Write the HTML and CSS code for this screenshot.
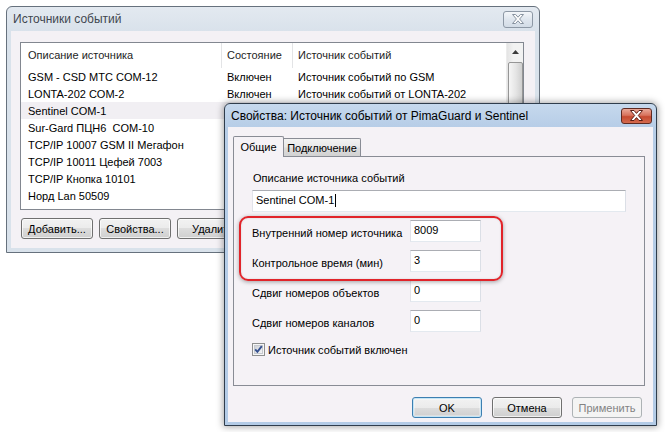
FILE: index.html
```html
<!DOCTYPE html>
<html lang="ru">
<head>
<meta charset="utf-8">
<title>Источники событий</title>
<link rel="stylesheet" href="styles.css">
</head>
<body>
<div class="desk">
  <section class="win w1">
    <header class="titlebar">
      <span class="title t-inactive">Источники событий</span>
      <span class="close close-inactive">
        <svg width="12" height="10" viewBox="0 0 12 10"><path d="M0.5 0.5H3.6L6 3.2L8.4 0.5H11.5L7.6 5L11.5 9.5H8.4L6 6.8L3.6 9.5H0.5L4.4 5Z" fill="#fdfdfd" stroke="#8893a0" stroke-width="1"/></svg>
      </span>
    </header>
    <div class="client c1">
      <div class="listbox">
        <div class="list-main">
          <div class="lv-row lv-head">
            <span class="col col1">Описание источника</span>
            <span class="col col2">Состояние</span>
            <span class="col col3">Источник событий</span>
          </div>
          <div class="lv-row"><span class="col col1">GSM - CSD МТС COM-12</span><span class="col col2">Включен</span><span class="col col3">Источник событий по GSM</span></div>
          <div class="lv-row"><span class="col col1">LONTA-202 COM-2</span><span class="col col2">Включен</span><span class="col col3">Источник событий от LONTA-202</span></div>
          <div class="lv-row sel"><span class="col col1">Sentinel COM-1</span><span class="col col2"></span><span class="col col3"></span></div>
          <div class="lv-row"><span class="col col1">Sur-Gard ПЦН6&nbsp; COM-10</span><span class="col col2"></span><span class="col col3"></span></div>
          <div class="lv-row"><span class="col col1">TCP/IP 10007 GSM II Мегафон</span><span class="col col2"></span><span class="col col3"></span></div>
          <div class="lv-row"><span class="col col1">TCP/IP 10011 Цефей 7003</span><span class="col col2"></span><span class="col col3"></span></div>
          <div class="lv-row"><span class="col col1">TCP/IP Кнопка 10101</span><span class="col col2"></span><span class="col col3"></span></div>
          <div class="lv-row"><span class="col col1">Норд Lan 50509</span><span class="col col2"></span><span class="col col3"></span></div>
        </div>
        <div class="vscroll">
          <div class="sb-arrow">
            <svg width="7" height="4" viewBox="0 0 7 4"><path d="M0 4L3.5 0L7 4Z" fill="#3c3c3c"/></svg>
          </div>
          <div class="sb-thumb"></div>
        </div>
      </div>
      <div class="btn-row">
        <button class="btn">Добавить...</button>
        <button class="btn">Свойства...</button>
        <button class="btn">Удалить</button>
      </div>
    </div>
  </section>

  <section class="win w2">
    <header class="titlebar tb2">
      <span class="title">Свойства: Источник событий от PimaGuard и Sentinel</span>
      <span class="close close-active">
        <svg width="13" height="11" viewBox="0 0 13 11"><path d="M0.5 0.5H4L6.5 3.4L9 0.5H12.5L8.3 5.5L12.5 10.5H9L6.5 7.6L4 10.5H0.5L4.7 5.5Z" fill="#ffffff" stroke="#5a1d15" stroke-width="1"/></svg>
      </span>
    </header>
    <div class="client c2">
      <div class="tabs">
        <span class="tab tab-active">Общие</span>
        <span class="tab tab-idle">Подключение</span>
      </div>
      <div class="panel">
        <label class="lbl-top">Описание источника событий</label>
        <div class="edit edit-wide"><span>Sentinel COM-1</span><span class="caret"></span></div>
        <div class="form">
          <span class="flabel">Внутренний номер источника</span>
          <div class="edit"><span>8009</span></div>
          <span class="flabel">Контрольное время (мин)</span>
          <div class="edit"><span>3</span></div>
          <span class="flabel">Сдвиг номеров объектов</span>
          <div class="edit"><span>0</span></div>
          <span class="flabel">Сдвиг номеров каналов</span>
          <div class="edit"><span>0</span></div>
        </div>
        <div class="check-row">
          <svg class="chk" width="13" height="13" viewBox="0 0 13 13">
            <defs>
              <linearGradient id="cg" x1="0" y1="0" x2="1" y2="1">
                <stop offset="0" stop-color="#cbcfd5"/>
                <stop offset="1" stop-color="#f7f7f7"/>
              </linearGradient>
            </defs>
            <rect x="0.5" y="0.5" width="12" height="12" fill="#f6f6f6" stroke="#8e8f8f"/>
            <rect x="2.5" y="2.5" width="8" height="8" fill="url(#cg)" stroke="#c6c9cf"/>
            <path d="M3.2 6.4L5.4 8.8L9.8 3.2" fill="none" stroke="#34508f" stroke-width="1.9"/>
          </svg>
          <span>Источник событий включен</span>
        </div>
        <div class="highlight"></div>
      </div>
      <div class="footer">
        <button class="btn btn-default">OK</button>
        <button class="btn">Отмена</button>
        <button class="btn btn-disabled">Применить</button>
      </div>
    </div>
  </section>
</div>
</body>
</html>
```

FILE: styles.css
```css
* { box-sizing: border-box; }
html, body { margin: 0; padding: 0; }
body {
  width: 665px;
  height: 432px;
  background: #ffffff;
  font-family: "Liberation Sans", sans-serif;
  font-size: 11px;
  color: #000;
  overflow: hidden;
}
.desk { position: relative; width: 665px; height: 432px; }

.win {
  position: absolute;
  display: flex;
  flex-direction: column;
  border: 1px solid;
  border-radius: 6px 6px 0 0;
}
.w1 {
  left: 6px; top: 6px; width: 534px; height: 247px;
  border-color: #66717d;
  background: linear-gradient(#e3e9f0, #d9e2eb 24px, #d9e2eb);
  padding: 0 4px 4px;
}
.w2 {
  left: 224px; top: 103px; width: 433px; height: 323px;
  border-color: #2f3d4c;
  background: linear-gradient(#c6d9ed, #b6cde7 24px, #b3cbe6);
  padding: 0 3px 3px;
  box-shadow: 0 0 7px 1px rgba(0, 0, 0, 0.35);
  z-index: 2;
}

.titlebar {
  height: 24px;
  flex: none;
  display: flex;
  align-items: center;
  justify-content: space-between;
  padding: 0 2px 0 2px;
}
.tb2 { height: 23px; padding: 0 1px 0 3px; }
.title {
  font-family: "Liberation Sans", sans-serif;
  font-size: 12px;
  color: #000;
  white-space: nowrap;
}
.t-inactive { color: #3f4750; }

.close {
  width: 30px; height: 17px;
  border-radius: 3px;
  display: flex; align-items: center; justify-content: center;
  border: 1px solid;
}
.close-inactive {
  border-color: #8d98a5;
  background: linear-gradient(#f3f6f9, #dfe6ee 50%, #d3dce6);
}
.close-active {
  width: 31px; height: 16px;
  border-color: #5e2a22;
  background: linear-gradient(#eaa898, #d8735d 45%, #c64a30 55%, #d46a4e);
}

.client { flex: 1; display: flex; flex-direction: column; }
.c1 { background: #f4f1f5; padding: 11px 11px 0 9px; }
.c2 { background: #f5f2f6; padding: 8px 8px 0 5px; }

/* list view */
.listbox {
  height: 168px;
  border: 1px solid #828790;
  background: #fff;
  display: flex;
}
.list-main { flex: 1; display: flex; flex-direction: column; overflow: hidden; }
.lv-row { display: flex; height: 17px; align-items: center; white-space: nowrap; }
.lv-head { height: 25px; color: #1e1e1e; }
.lv-row.sel { background: #f1eff3; }
.col { display: block; overflow: hidden; }
.col1 { width: 201px; padding-left: 7px; }
.col2 { width: 71px; padding-left: 5px; }
.col3 { flex: 1; padding-left: 5px; }
.lv-head .col { height: 25px; line-height: 25px; }
.lv-head .col1, .lv-head .col2 { border-right: 1px solid #e3e4e6; }

.vscroll {
  width: 17px;
  flex: none;
  background: linear-gradient(90deg, #e4e4e4, #f2f2f2 40%, #f2f2f2);
  border-left: 1px solid #ececec;
  display: flex;
  flex-direction: column;
  align-items: center;
}
.sb-arrow { height: 17px; width: 16px; display: flex; align-items: center; justify-content: center; }
.sb-thumb {
  margin-top: 2px;
  width: 15px;
  flex: 1;
  border: 1px solid #969696;
  border-radius: 2px;
  background: linear-gradient(90deg, #f6f6f6, #e4e4e4 55%, #cfcfcf);
}

/* buttons */
.btn-row { display: flex; gap: 6px; margin-top: 8px; padding-left: 1px; }
.btn {
  font-family: inherit;
  font-size: 11px;
  color: #000;
  width: 72px;
  height: 21px;
  padding: 0;
  border: 1px solid #707070;
  border-radius: 3px;
  background: linear-gradient(#f2f2f2, #ebebeb 50%, #dddddd 50%, #cfcfcf);
  box-shadow: inset 0 0 0 1px rgba(255, 255, 255, 0.7);
  white-space: nowrap;
  text-align: center;
}
.btn-default {
  border-color: #3c7fb1;
  box-shadow: inset 0 0 0 1px #c4e5f6, inset 0 0 0 2px rgba(255, 255, 255, 0.3);
}
.btn-disabled {
  border-color: #adb2b5;
  background: #f4f4f4;
  color: #838383;
  box-shadow: none;
}

/* tabs */
.tabs { display: flex; align-items: flex-end; height: 21px; flex: none; }
.tab {
  display: flex; align-items: center; justify-content: center;
  border: 1px solid #898c95;
  border-bottom: none;
  white-space: nowrap;
}
.tab-active {
  width: 51px; height: 21px;
  background: #f5f2f6;
  position: relative;
  z-index: 1;
  margin-bottom: -1px;
  padding-bottom: 1px;
  border-radius: 2px 2px 0 0;
}
.tab-idle {
  width: 77px; height: 18px;
  border-left: none;
  background: linear-gradient(#f3f3f3, #e8e8e8 45%, #dcdcdc 55%, #d2d2d2);
  border-radius: 0 2px 0 0;
}

.panel {
  position: relative;
  height: 230px;
  border: 1px solid #898c95;
  background: #f5f2f6;
  padding: 14px 0 0 19px;
  display: flex;
  flex-direction: column;
  align-items: flex-start;
}
.lbl-top { line-height: 14px; }
.edit {
  width: 71px;
  height: 22px;
  background: #fff;
  border: 1px solid #dbdfe6;
  border-top-color: #abadb3;
  border-left-color: #e2e3ea;
  border-bottom-color: #e3e9ef;
  padding: 3px 0 0 3px;
  display: flex;
  align-items: flex-start;
  white-space: nowrap;
}
.edit-wide { width: 374px; margin-top: 5px; margin-left: -1px; }
.caret { width: 1px; height: 13px; background: #000; margin-left: 1px; }

.form {
  margin-top: 8px;
  margin-left: -1px;
  display: grid;
  grid-template-columns: 158px 71px;
  row-gap: 8px;
  align-items: center;
}
.flabel { padding-top: 3px; white-space: nowrap; }

.check-row {
  margin-top: 11px;
  margin-left: -1px;
  display: flex;
  align-items: center;
  gap: 3px;
  white-space: nowrap;
}
.chk { display: block; flex: none; }

.highlight {
  position: absolute;
  left: 5px; top: 59px;
  width: 264px; height: 65px;
  border: 2px solid #e1242a;
  border-radius: 9px;
  box-shadow: 0 1px 4px rgba(0, 0, 0, 0.35), inset 0 0 2px rgba(0, 0, 0, 0.15);
  pointer-events: none;
}

.footer {
  display: flex;
  justify-content: flex-end;
  gap: 10px;
  margin-top: 11px;
  margin-right: 3px;
}
.footer .btn { width: 70px; }
```
